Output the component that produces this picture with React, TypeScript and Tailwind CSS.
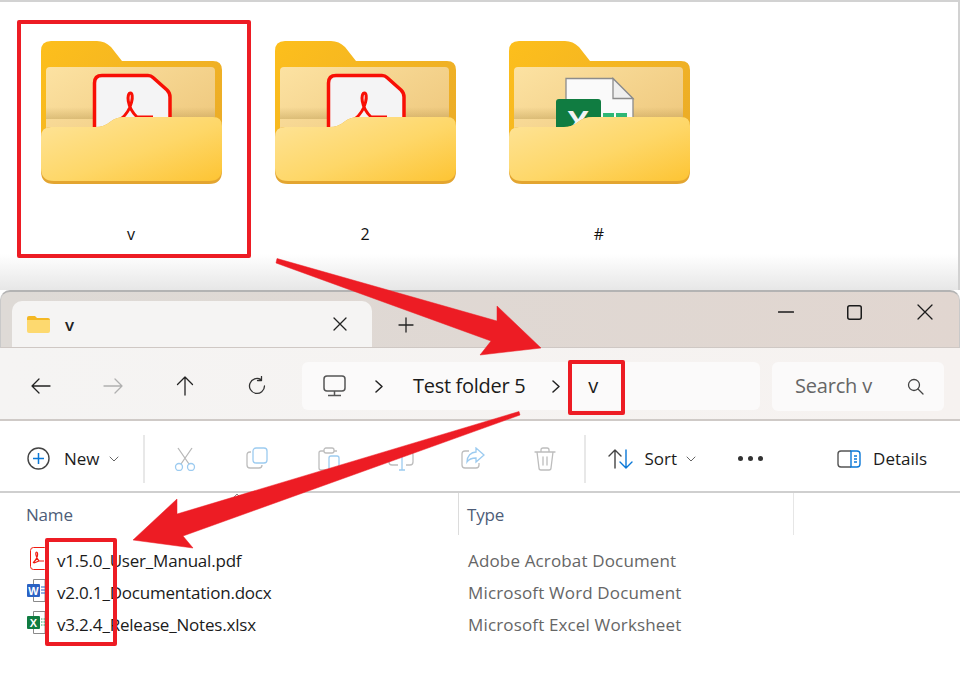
import React from "react";

const RED = "#ed1c24";

function BigFolder({ kind, id }: { kind: "pdf" | "xlsx"; id: string }) {
  return (
    <svg width="181" height="143" viewBox="0 0 181 143" className="block">
      <defs>
        <linearGradient id={id + "b"} x1="0" y1="0" x2="1" y2="0.6">
          <stop offset="0" stopColor="#fdbf1c" />
          <stop offset="1" stopColor="#ecad27" />
        </linearGradient>
        <linearGradient id={id + "p"} x1="0" y1="0" x2="1" y2="0.7">
          <stop offset="0" stopColor="#fce2a2" />
          <stop offset="1" stopColor="#efc97f" />
        </linearGradient>
        <linearGradient id={id + "f"} x1="0" y1="0" x2="1" y2="1">
          <stop offset="0" stopColor="#fee49a" />
          <stop offset="0.55" stopColor="#fed768" />
          <stop offset="1" stopColor="#fdc433" />
        </linearGradient>
        <linearGradient id={id + "s"} x1="0" y1="0" x2="0" y2="1">
          <stop offset="0" stopColor="#8a6a20" stopOpacity="0" />
          <stop offset="1" stopColor="#8a6a20" stopOpacity="0.25" />
        </linearGradient>
      </defs>
      <path d="M0 10Q0 0 10 0H56Q64 0 70 6L81 20H172Q181 20 181 29V120H0Z" fill={`url(#${id}b)`} />
      <path d="M5 30Q5 26 9 26H170Q174 26 174 30V100H5Z" fill={`url(#${id}p)`} />
      <rect x="5" y="66" width="169" height="12" fill={`url(#${id}s)`} />
      {kind === "pdf" ? (
        <g>
          <path d="M53.500 100V42Q53.500 34.500 61 34.500H107Q110 34.500 112 36.500L126 49Q129 52 129 56V100Z" fill="#f4f4f5" stroke="#f80f05" strokeWidth="3.500" />
          <path d="M80 78C92 68 93 52 89.500 52C85.500 52 85.500 66 96 76H112" fill="none" stroke="#f80f05" strokeWidth="3" />
        </g>
      ) : (
        <g>
          <path d="M57 37.500H104L124 57.500V100H57Z" fill="#fafafa" stroke="#8c8c8c" strokeWidth="1.300" />
          <path d="M104 37.500V57.500H124Z" fill="#efefef" stroke="#8c8c8c" strokeWidth="1.300" />
          <rect x="47" y="58" width="45" height="50" rx="3" fill="#107c41" />
          <text x="69" y="93" textAnchor="middle" fill="#f3f3f3" fontSize="34" fontWeight="700" fontFamily="'Liberation Sans', sans-serif">X</text>
          <rect x="94" y="72" width="11" height="6" fill="#2fb776" />
          <rect x="107" y="72" width="11" height="6" fill="#2fb776" />
        </g>
      )}
      <path d="M0 96Q0 86 10 86H55Q63 86 69 81Q75 76 84 76H172Q181 76 181 85V130Q181 143 168 143H13Q0 143 0 130Z" fill="#e3a530" />
      <path d="M0 96Q0 86 10 86H55Q63 86 69 81Q75 76 84 76H172Q181 76 181 85V127Q181 140 168 140H13Q0 140 0 127Z" fill={`url(#${id}f)`} />
    </svg>
  );
}

function TabFolder() {
  return (
    <svg width="23" height="17" viewBox="0 0 23 17" className="block">
      <path d="M0 2Q0 0 2 0H8L10 2H21Q23 2 23 4V15H0Z" fill="#f4b824" />
      <path d="M0 4H23V15Q23 17 21 17H2Q0 17 0 15Z" fill="#fdd96f" />
    </svg>
  );
}

const line = { fill: "none", stroke: "currentColor", strokeWidth: 1.3, strokeLinecap: "round" as const, strokeLinejoin: "round" as const };

function Ico({ children, w = 24, h = 24 }: { children: React.ReactNode; w?: number; h?: number }) {
  return (
    <svg width={w} height={h} viewBox={`0 0 ${w} ${h}`} className="block" {...line}>
      {children}
    </svg>
  );
}

function Chevron() {
  return (
    <svg width="10" height="6" viewBox="0 0 10 6" className="block text-[#666]" {...line} strokeWidth={1}>
      <path d="M1 1L5 5L9 1" />
    </svg>
  );
}

function Crumb() {
  return (
    <svg width="8" height="13" viewBox="0 0 8 13" className="block text-[#222]" {...line} strokeWidth={1.5}>
      <path d="M1 1L7 6.500L1 12" />
    </svg>
  );
}

function NavBtn({ children, cls }: { children: React.ReactNode; cls: string }) {
  return <div className={`w-[72px] flex justify-center ${cls}`}>{children}</div>;
}

function ToolCell({ children }: { children: React.ReactNode }) {
  return <div className="w-[72px] flex justify-center">{children}</div>;
}

function PdfSmall() {
  return (
    <svg width="16" height="23" viewBox="0 0 16 23" className="block">
      <rect x="0.500" y="0.500" width="17" height="22" rx="3" fill="#fff" stroke="#f01a10" />
      <path d="M3 16C8 12 8.500 5 6.500 5C5 5 6 11 9 14H14M4 16L9 14" fill="none" stroke="#f01a10" strokeWidth="1.200" />
    </svg>
  );
}

function WordSmall() {
  return (
    <svg width="18" height="23" viewBox="0 0 18 23" className="block">
      <path d="M6.500 0.500H18V22.500H6.500Z" fill="#fff" stroke="#8a8a8a" />
      <rect x="0" y="5" width="13" height="13" rx="1" fill="#2b62c3" />
      <text x="6.500" y="15.500" textAnchor="middle" fill="#fff" fontSize="11" fontWeight="700" fontFamily="'Liberation Sans', sans-serif">W</text>
      <path d="M14 8H18M14 11H18M14 14H18" stroke="#2b62c3" />
    </svg>
  );
}

function ExcelSmall() {
  return (
    <svg width="18" height="23" viewBox="0 0 18 23" className="block">
      <path d="M6.500 0.500H18V22.500H6.500Z" fill="#fff" stroke="#8a8a8a" />
      <rect x="0" y="5" width="13" height="13" rx="1" fill="#107c41" />
      <text x="6.500" y="15.500" textAnchor="middle" fill="#fff" fontSize="11" fontWeight="700" fontFamily="'Liberation Sans', sans-serif">X</text>
      <path d="M14 8H18M14 11H18M14 14H18" stroke="#2fa36a" strokeDasharray="1.500 1" />
    </svg>
  );
}

const files = [
  { name: "v1.5.0_User_Manual.pdf", type: "Adobe Acrobat Document", icon: <PdfSmall />, pl: "pl-[30px]" },
  { name: "v2.0.1_Documentation.docx", type: "Microsoft Word Document", icon: <WordSmall />, pl: "pl-[27px]" },
  { name: "v3.2.4_Release_Notes.xlsx", type: "Microsoft Excel Worksheet", icon: <ExcelSmall />, pl: "pl-[27px]" },
];

export default function App() {
  return (
    <div
      className="relative w-[960px] h-[697px] overflow-hidden bg-white text-[#1b1b1b]"
      style={{ fontFamily: "'Open Sans', 'Noto Sans', sans-serif" }}
    >
      {/* Upper folder view */}
      <div className="h-[291px] border-t-2 border-r-2 border-[#d2d2d2] bg-[linear-gradient(to_bottom,#ffffff_0,#ffffff_252px,#e6e6e6_289px)] pl-[14px] pt-[39px] flex items-start">
        {[
          { label: "v", kind: "pdf" as const },
          { label: "2", kind: "pdf" as const },
          { label: "#", kind: "xlsx" as const },
        ].map((f, i) => (
          <div key={i} className="w-[234px] flex flex-col items-center">
            <BigFolder kind={f.kind} id={"folder" + i} />
            <div className="mt-[40px] text-[16px] leading-[20px] text-[#111]">{f.label}</div>
          </div>
        ))}
      </div>

      {/* Explorer window */}
      <div className="-mt-[1px] bg-white">
        {/* Title bar */}
        <div className="h-[58px] rounded-t-[10px] border-t-2 border-x border-[#b3b3b3] border-x-[#c9c9c9] bg-[linear-gradient(to_right,#dedad6,#e1d6d0)] flex items-end pl-[11px] border-b border-b-[#cfc8c4]">
          <div className="w-[360px] h-[46px] bg-[#f5f4f3] rounded-t-[10px] flex items-center pl-[15px]">
            <TabFolder />
            <span className="ml-[15px] text-[17px] font-semibold text-[#222] leading-none">v</span>
            <div className="ml-auto mr-[25px] text-[#222]">
              <Ico w={14} h={14}><path d="M1 1L13 13M13 1L1 13" /></Ico>
            </div>
          </div>
          <div className="ml-[26px] mb-[14px] text-[#222]">
            <Ico w={16} h={16}><path d="M8 1V15M1 8H15" /></Ico>
          </div>
          <div className="ml-auto self-start mt-[12px] flex items-center text-[#1b1b1b]">
            <div className="w-[16px]"><Ico w={16} h={16}><path d="M0.500 8H15.500" /></Ico></div>
            <div className="ml-[53px]">
              <svg width="15" height="15" viewBox="0 0 15 15" className="block" fill="none" stroke="currentColor" strokeWidth="1.500"><rect x="0.750" y="0.750" width="13.500" height="13.500" rx="2" /></svg>
            </div>
            <div className="ml-[55px] mr-[26px]">
              <Ico w={16} h={16}><path d="M1 1L15 15M15 1L1 15" /></Ico>
            </div>
          </div>
        </div>

        {/* Address bar */}
        <div className="h-[73px] bg-[linear-gradient(to_right,#f5f4f3,#f6f2f0)] border-b-2 border-[#cfcac7] flex items-center pl-[5px] pt-[5px]">
          <NavBtn cls="text-[#222]"><Ico w={20} h={16}><path d="M19 8H1M8 1L1 8L8 15" /></Ico></NavBtn>
          <NavBtn cls="text-[#b0b0b0]"><Ico w={20} h={16}><path d="M1 8H19M12 1L19 8L12 15" /></Ico></NavBtn>
          <NavBtn cls="text-[#222]"><Ico w={18} h={20}><path d="M9 19V1M1.500 8.500L9 1L16.500 8.500" /></Ico></NavBtn>
          <NavBtn cls="text-[#333]"><Ico w={20} h={20}><path d="M17.500 10A7.500 7.500 0 1 1 14 3.600M14.500 0.500V4.500H10.500" /></Ico></NavBtn>
          <div className="ml-[9px] w-[458px] h-[48px] bg-[#fbfafa] rounded-[6px] flex items-center pl-[21px] text-[20px]">
            <svg width="23" height="22" viewBox="0 0 23 22" className="block text-[#555]" fill="none" stroke="currentColor" strokeWidth="1.500">
              <rect x="1" y="1" width="21" height="15" rx="3" />
              <path d="M11.500 16V20M5 20.500H18" />
            </svg>
            <div className="ml-[29px]"><Crumb /></div>
            <span className="ml-[30px] leading-none tracking-[-0.3px]">Test folder 5</span>
            <div className="ml-[27px]"><Crumb /></div>
            <span className="ml-[28px] leading-none">v</span>
          </div>
          <div className="ml-[12px] w-[172px] h-[49px] bg-[#fbfafa] rounded-[6px] flex items-center pl-[23px] pr-[20px] text-[20px] text-[#666]">
            <span className="leading-none tracking-[-0.2px]">Search v</span>
            <svg width="17" height="17" viewBox="0 0 17 17" className="ml-auto block text-[#444]" {...line}>
              <circle cx="7" cy="7" r="5.500" />
              <path d="M11 11L16 16" />
            </svg>
          </div>
        </div>

        {/* Toolbar */}
        <div className="h-[72px] bg-white border-b-2 border-[#cfcfcf] flex items-center pl-[27px] pt-[5px] text-[17px]">
          <svg width="23" height="23" viewBox="0 0 23 23" className="block">
            <circle cx="11.500" cy="11.500" r="10.500" fill="none" stroke="#444" strokeWidth="1.400" />
            <path d="M11.500 6V17M6 11.500H17" stroke="#0a78d7" strokeWidth="1.500" />
          </svg>
          <span className="ml-[14px] leading-none">New</span>
          <div className="ml-[9px]"><Chevron /></div>
          <div className="ml-[24px] w-[2px] h-[48px] bg-[#e8e8e8]" />
          <div className="flex ml-[4px]">
            <ToolCell>
              <svg width="22" height="24" viewBox="0 0 22 24" className="block" fill="none" strokeWidth="1.300">
                <path d="M4 1L15 17M18 1L7 17" stroke="#b8b8b8" />
                <circle cx="5" cy="20" r="3.500" stroke="#9ccbf0" />
                <circle cx="17" cy="20" r="3.500" stroke="#9ccbf0" />
              </svg>
            </ToolCell>
            <ToolCell>
              <svg width="22" height="22" viewBox="0 0 22 22" className="block" fill="none" strokeWidth="1.300">
                <path d="M5 5H4Q1 5 1 8V18Q1 21 4 21H13Q16 21 16 18" stroke="#bdbdbd" />
                <rect x="7" y="1" width="14" height="15" rx="3" stroke="#9ccbf0" />
              </svg>
            </ToolCell>
            <ToolCell>
              <svg width="22" height="24" viewBox="0 0 22 24" className="block" fill="none" strokeWidth="1.300">
                <path d="M6 4H3Q1 4 1 6V21Q1 23 3 23H9M16 4H19" stroke="#bdbdbd" />
                <rect x="6" y="1" width="10" height="5" rx="2" stroke="#bdbdbd" />
                <rect x="11" y="9" width="10" height="14" rx="2" stroke="#9ccbf0" />
              </svg>
            </ToolCell>
            <ToolCell>
              <svg width="26" height="24" viewBox="0 0 26 24" className="block" fill="none" strokeWidth="1.300">
                <path d="M8 5H4Q1 5 1 8V15Q1 18 4 18H10M18 18H22Q25 18 25 15V8Q25 5 22 5H18" stroke="#bdbdbd" />
                <path d="M14 1V23M11 23H17" stroke="#9ccbf0" />
              </svg>
            </ToolCell>
            <ToolCell>
              <svg width="24" height="22" viewBox="0 0 24 22" className="block" fill="none" strokeWidth="1.300">
                <path d="M8 4H4Q1 4 1 7V18Q1 21 4 21H15Q18 21 18 18V16" stroke="#bdbdbd" />
                <path d="M15 1L23 8L15 15V11C11 11 8 12 6 15C6 9 10 5 15 5Z" stroke="#9ccbf0" />
              </svg>
            </ToolCell>
            <ToolCell>
              <svg width="22" height="24" viewBox="0 0 22 24" className="block text-[#bdbdbd]" {...line}>
                <path d="M1 5H21M7 5V3Q7 1 9 1H13Q15 1 15 3V5M3 5L5 21Q5 23 7 23H15Q17 23 17 21L19 5M9 10V18M13 10V18" />
              </svg>
            </ToolCell>
          </div>
          <div className="ml-[3px] w-[2px] h-[48px] bg-[#e8e8e8]" />
          <svg width="25" height="20" viewBox="0 0 25 20" className="ml-[22px] block" fill="none" strokeWidth="1.400" strokeLinecap="round">
            <path d="M7 19V1M1 7L7 1L13 7" stroke="#444" />
            <path d="M18 1V19M12 13L18 19L24 13" stroke="#0a78d7" />
          </svg>
          <span className="ml-[12px] leading-none">Sort</span>
          <div className="ml-[9px]"><Chevron /></div>
          <div className="ml-[42px] flex gap-[5px]">
            <div className="w-[5px] h-[5px] rounded-full bg-[#333]" />
            <div className="w-[5px] h-[5px] rounded-full bg-[#333]" />
            <div className="w-[5px] h-[5px] rounded-full bg-[#333]" />
          </div>
          <svg width="24" height="18" viewBox="0 0 24 18" className="ml-[74px] block" fill="none" strokeWidth="1.400">
            <path d="M14 1H4Q1 1 1 4V14Q1 17 4 17H14" stroke="#555" />
            <path d="M14 1H20Q23 1 23 4V14Q23 17 20 17H14Z" stroke="#0a78d7" />
            <path d="M17 6H20M17 9H20M17 12H20" stroke="#0a78d7" />
          </svg>
          <span className="ml-[12px] leading-none">Details</span>
        </div>

        {/* Column heads */}
        <div className="relative flex h-[42px] text-[17px] tracking-[-0.2px] text-[#4e5d78]">
          <div className="w-[459px] border-r border-[#dcdcdc] pl-[26px] pt-[10px] leading-[24px]">Name</div>
          <div className="w-[335px] border-r border-[#e6e6e6] pl-[8px] pt-[10px] leading-[24px]">Type</div>
          <svg width="8" height="5" viewBox="0 0 8 5" className="absolute left-[233px] top-0 block text-[#888]" {...line} strokeWidth={1}>
            <path d="M1 4L4 1L7 4" />
          </svg>
        </div>

        {/* Files */}
        <div className="bg-white pt-[9px]">
          {files.map((f) => (
            <div key={f.name} className="h-[32px] flex items-center text-[17px]">
              <div className={`w-[57px] pb-[3px] ${f.pl}`}>{f.icon}</div>
              <div className="w-[411px] leading-none tracking-[-0.2px]">{f.name}</div>
              <div className="leading-none text-[#666] tracking-[0.15px]">{f.type}</div>
            </div>
          ))}
        </div>
      </div>

      {/* Annotations */}
      <svg width="960" height="697" viewBox="0 0 960 697" className="absolute left-0 top-0 block pointer-events-none">
        <path d="M277 258.500L497 321V306L541 348L480 355L491 341L276 263Z" fill={RED} stroke={RED} strokeWidth="0.500" strokeLinejoin="round" />
        <path d="M519 411.500L177 514V499L133 540L193 548L183 536L520 415Z" fill={RED} stroke={RED} strokeWidth="0.500" strokeLinejoin="round" />
      </svg>
      <div className="absolute left-[17px] top-[20px] w-[234px] h-[238px] border-4 border-[#ed1c24] rounded-[2px]" />
      <div className="absolute left-[568px] top-[360px] w-[57px] h-[55px] border-4 border-[#ed1c24] rounded-[2px]" />
      <div className="absolute left-[45px] top-[538px] w-[72px] h-[108px] border-4 border-[#ed1c24] rounded-[2px]" />
    </div>
  );
}
